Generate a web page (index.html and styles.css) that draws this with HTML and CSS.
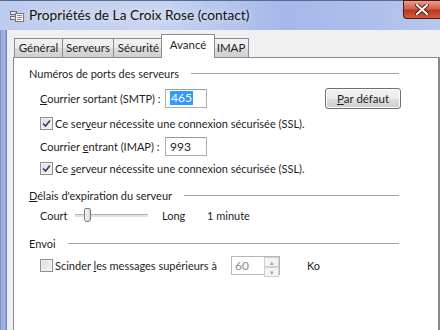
FILE: index.html
```html
<!DOCTYPE html>
<html lang="fr">
<head>
    <meta charset="UTF-8">
    <title>Propriétés de La Croix Rose (contact)</title>
    <link rel="stylesheet" href="styles.css">
</head>
<body>
    <div class="window">
        <div class="titlebar">
            <svg class="app-icon" width="14" height="14" viewBox="0 0 14 14">
                <rect x="0.5" y="2.5" width="6" height="3" fill="#e8e8e8" stroke="#6d6d6d"/>
                <rect x="0.5" y="7.5" width="6" height="3" fill="#e8e8e8" stroke="#6d6d6d"/>
                <rect x="5.5" y="4.5" width="8" height="8" fill="#f4f4f4" stroke="#7a7a7a"/>
                <rect x="7" y="6" width="5" height="1" fill="#8a8a8a"/>
                <rect x="7" y="8" width="5" height="1" fill="#8a8a8a"/>
                <rect x="7" y="10" width="4" height="1" fill="#8a8a8a"/>
            </svg>
            <span class="title">Propriétés de La Croix Rose (contact)</span>
            <div class="close-btn">
                <svg width="14" height="11" viewBox="0 0 14 11">
                    <path d="M2 1 L12 10 M12 1 L2 10" stroke="#5a2016" stroke-width="4" stroke-linecap="square"/>
                    <path d="M2 1 L12 10 M12 1 L2 10" stroke="#ffffff" stroke-width="2" stroke-linecap="square"/>
                </svg>
            </div>
        </div>

        <div class="frame">
            <div class="client">
                <div class="tabs">
                    <div class="tab tab-general">Général</div>
                    <div class="tab tab-servers">Serveurs</div>
                    <div class="tab tab-security">Sécurité</div>
                    <div class="tab active">Avancé</div>
                    <div class="tab tab-imap">IMAP</div>
                </div>

                <div class="panel">
                    <div class="group-head">
                        <span>Numéros de ports des serveurs</span>
                        <span class="rule"></span>
                    </div>

                    <div class="row port-row first">
                        <span class="label"><u>C</u>ourrier sortant (SMTP) :</span>
                        <span class="field"><span class="sel">465</span></span>
                        <span class="button"><u>P</u>ar défaut</span>
                    </div>
                    <div class="row check-row">
                        <span class="checkbox checked">
                            <svg width="9" height="9" viewBox="0 0 9 9"><path d="M1 4.5 L3.5 7 L8 1.5" fill="none" stroke="#2c3f7a" stroke-width="1.6"/></svg>
                        </span>
                        <span>Ce ser<u>v</u>eur nécessite une connexion sécurisée (SSL).</span>
                    </div>

                    <div class="row port-row">
                        <span class="label">Courrier <u>e</u>ntrant (IMAP) :</span>
                        <span class="field">993</span>
                    </div>
                    <div class="row check-row short">
                        <span class="checkbox checked">
                            <svg width="9" height="9" viewBox="0 0 9 9"><path d="M1 4.5 L3.5 7 L8 1.5" fill="none" stroke="#2c3f7a" stroke-width="1.6"/></svg>
                        </span>
                        <span>Ce <u>s</u>erveur nécessite une connexion sécurisée (SSL).</span>
                    </div>

                    <div class="group-head spaced">
                        <span><u>D</u>élais d'expiration du serveur</span>
                        <span class="rule"></span>
                    </div>
                    <div class="row slider-row">
                        <span class="court">Court</span>
                        <span class="slider">
                            <span class="track"></span>
                            <span class="thumb"></span>
                        </span>
                        <span class="long">Long</span>
                        <span>1 minute</span>
                    </div>

                    <div class="group-head spaced">
                        <span>Envoi</span>
                        <span class="rule"></span>
                    </div>
                    <div class="row check-row split-row">
                        <span class="checkbox"></span>
                        <span class="split-label">Scinder <u>l</u>es messages supérieurs à</span>
                        <span class="spin">
                            <span class="spin-value">60</span>
                            <span class="spin-btns">
                                <span class="spin-btn">▴</span>
                                <span class="spin-btn">▾</span>
                            </span>
                        </span>
                        <span class="unit">Ko</span>
                    </div>
                </div>
            </div>
        </div>
    </div>
</body>
</html>
```

FILE: styles.css
```css
html, body {
    margin: 0;
    padding: 0;
}
body {
    width: 440px;
    height: 330px;
    overflow: hidden;
    font-family: Lato, "Liberation Sans", sans-serif;
    font-size: 11px;
    color: #1e1e1e;
    background-color: #a6b5e3;
}
u {
    text-decoration: underline;
    text-underline-offset: 1px;
}
.window {
    display: flex;
    flex-direction: column;
    height: 330px;
}
.titlebar {
    height: 30px;
    flex: none;
    display: flex;
    align-items: flex-start;
    position: relative;
    background: linear-gradient(90deg, #bccbee 0%, #c9d5f0 35%, #a4b8ea 65%, #aebfec 85%, #b9c7ee 100%);
    border-top: 1px solid #5b6a8f;
    box-sizing: border-box;
}
.app-icon {
    margin: 8px 0 0 10px;
}
.title {
    margin: 5px 0 0 5px;
    font-size: 13.7px;
    color: #111;
    text-shadow: 0 0 6px rgba(255, 255, 255, 0.9);
}
.close-btn {
    position: absolute;
    right: 0;
    top: -1px;
    width: 37px;
    height: 19px;
    border: 1px solid #4a1a12;
    border-right: none;
    border-radius: 0 0 0 4px;
    background: linear-gradient(180deg, #e5a08f 0%, #d2604a 45%, #b93a24 55%, #d45a3e 100%);
    display: flex;
    align-items: center;
    justify-content: center;
    box-sizing: border-box;
}
.frame {
    flex: 1;
    display: flex;
    padding-left: 7px;
    background: linear-gradient(90deg, #6f80b8 0px, #98a9dd 1px, #a7b7e6 5px, #7585bb 6px, #7585bb 7px);
}
.client {
    flex: 1;
    background-color: #f0f0f0;
    padding: 4px 0 0 6px;
    display: flex;
    flex-direction: column;
}
.tabs {
    flex: none;
    display: flex;
    align-items: flex-end;
    height: 23px;
    padding-left: 1px;
    position: relative;
    z-index: 1;
    font-size: 11.5px;
}
.tab {
    height: 19px;
    line-height: 18px;
    text-align: center;
    border: 1px solid #898c95;
    border-bottom: none;
    margin-right: -1px;
    background: linear-gradient(180deg, #f2f2f2 0%, #ebebeb 50%, #dddddd 51%, #cfcfcf 100%);
    box-sizing: border-box;
    color: #1e1e1e;
}
.tab-general {
    width: 49px;
}
.tab-servers {
    width: 52px;
}
.tab-security {
    width: 51px;
}
.tab-imap {
    width: 36px;
}
.tab.active {
    width: 54px;
    height: 24px;
    line-height: 20px;
    margin: 0 -2px 0 -2px;
    background: #ffffff;
    position: relative;
    top: 1px;
}
.panel {
    flex: 1;
    background-color: #ffffff;
    border: 1px solid #898c95;
    border-bottom: none;
    border-right: 2px solid #8a8a8a;
    padding: 5px 39px 0 15px;
    display: flex;
    flex-direction: column;
}
.group-head {
    display: flex;
    align-items: center;
    height: 20px;
    gap: 12px;
    flex: none;
}
.group-head.spaced {
    margin-top: 8px;
}
.rule {
    flex: 1;
    height: 1px;
    background-color: #a0a0a0;
}
.row {
    display: flex;
    align-items: center;
    height: 20px;
    padding-left: 11px;
    flex: none;
}
.port-row {
    height: 26px;
}
.port-row.first {
    height: 30px;
}
.label {
    width: 125px;
}
.field {
    width: 42px;
    height: 19px;
    border: 1px solid #abadb3;
    border-top-color: #9a9ca3;
    display: flex;
    align-items: center;
    padding-left: 4px;
    box-sizing: border-box;
    font-size: 12px;
}
.sel {
    background-color: #3399ff;
    color: #ffffff;
    padding: 0 1px;
    line-height: 14px;
}
.button {
    margin-left: auto;
    margin-right: -2px;
    width: 76px;
    height: 21px;
    border: 1px solid #707070;
    border-radius: 3px;
    box-sizing: border-box;
    display: flex;
    align-items: center;
    justify-content: center;
    background: linear-gradient(180deg, #f2f2f2 0%, #ebebeb 50%, #dddddd 51%, #cfcfcf 100%);
    box-shadow: inset 0 0 0 1px #fcfcfc;
    font-size: 11.5px;
}
.check-row {
    gap: 2px;
}
.check-row.short {
    height: 18px;
}
.checkbox {
    width: 13px;
    height: 13px;
    border: 1px solid #8e8f8f;
    box-sizing: border-box;
    background: linear-gradient(135deg, #dcdcdc 0%, #f6f6f6 100%);
    box-shadow: inset 0 0 0 1px #f4f4f4;
    display: flex;
    align-items: center;
    justify-content: center;
}
.court {
    width: 35px;
}
.slider {
    width: 73px;
    height: 16px;
    position: relative;
    display: flex;
    align-items: center;
}
.track {
    width: 100%;
    height: 2px;
    background-color: #e2e2e2;
    border-top: 1px solid #b4b4b4;
}
.thumb {
    position: absolute;
    left: 9px;
    top: 1px;
    width: 7px;
    height: 14px;
    border: 1px solid #7a7a7a;
    border-radius: 2px 2px 3px 3px;
    background: linear-gradient(90deg, #f4f4f4, #dcdcdc);
    box-sizing: border-box;
}
.long {
    margin-left: 14px;
    width: 45px;
}
.split-row {
    height: 24px;
}
.split-label {
    width: 174px;
}
.spin {
    width: 49px;
    height: 19px;
    border: 1px solid #b7b7b7;
    box-sizing: border-box;
    display: flex;
}
.spin-value {
    flex: 1;
    color: #8a8a8a;
    padding-left: 3px;
    line-height: 17px;
    font-size: 12px;
}
.spin-btns {
    width: 15px;
    display: flex;
    flex-direction: column;
}
.spin-btn {
    flex: 1;
    font-size: 7px;
    line-height: 8px;
    text-align: center;
    color: #a8a8a8;
    border: 1px solid #d0d0d0;
    background-color: #f4f4f4;
}
.unit {
    margin-left: 25px;
}
```
